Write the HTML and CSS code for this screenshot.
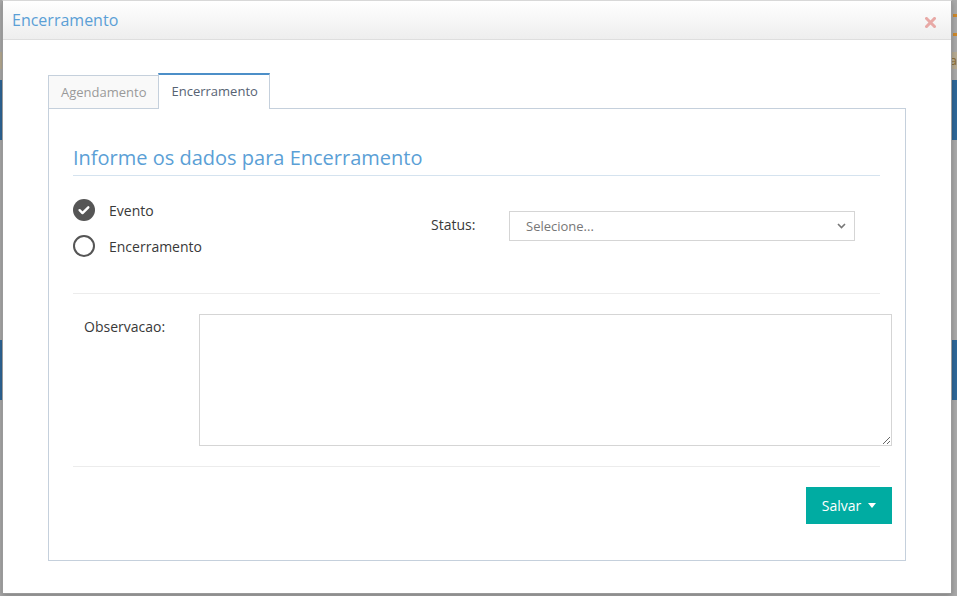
FILE: index.html
```html
<!DOCTYPE html>
<html lang="pt">
<head>
<meta charset="utf-8">
<title>Encerramento</title>
<link rel="stylesheet" href="styles.css">
</head>
<body>
<div class="backdrop">
  <div class="bg-marks"><span class="dash"></span><span class="dash"></span></div>
  <div class="bg-note">ia</div>
  <div class="bg-bar bar1"></div>
  <div class="bg-bar bar2"></div>
</div>

<div class="modal">
  <div class="modal-header">
    <h4 class="modal-title">Encerramento</h4>
    <button class="close" type="button" aria-label="Fechar">
      <svg width="11" height="11" viewBox="0 0 11 11"><path d="M1.5 1.5L9.5 9.5M9.5 1.5L1.5 9.5" stroke="#e8a9a6" stroke-width="3" stroke-linecap="square"/></svg>
    </button>
  </div>
  <div class="modal-body">
    <ul class="tabs">
      <li class="tab">Agendamento</li>
      <li class="tab active">Encerramento</li>
    </ul>
    <div class="tab-panel">
      <h3 class="section-title">Informe os dados para Encerramento</h3>

      <div class="form-row">
        <div class="radios">
          <label class="radio">
            <span class="radio-icon checked">
              <svg width="22" height="22" viewBox="0 0 22 22"><circle cx="11" cy="11" r="11" fill="#555"/><path d="M6.6 11.2l2.9 2.9 5.8-5.8" fill="none" stroke="#fff" stroke-width="2.4" stroke-linecap="round" stroke-linejoin="round"/></svg>
            </span>
            <span class="radio-text">Evento</span>
          </label>
          <label class="radio">
            <span class="radio-icon">
              <svg width="22" height="22" viewBox="0 0 22 22"><circle cx="11" cy="11" r="10" fill="none" stroke="#555" stroke-width="2"/></svg>
            </span>
            <span class="radio-text">Encerramento</span>
          </label>
        </div>
        <div class="status">
          <span class="status-label">Status:</span>
          <div class="select-wrap">
            <select class="select">
              <option>Selecione...</option>
            </select>
            <svg class="chevron" width="9" height="6" viewBox="0 0 9 6"><path d="M1 1l3.5 3.5L8 1" fill="none" stroke="#777" stroke-width="1.6"/></svg>
          </div>
        </div>
      </div>

      <hr class="divider">

      <div class="obs-row">
        <label class="obs-label">Observacao:</label>
        <textarea class="textarea"></textarea>
      </div>

      <hr class="divider second">

      <div class="actions">
        <button class="btn-save" type="button">Salvar <span class="caret"></span></button>
      </div>
    </div>
  </div>
</div>
</body>
</html>
```

FILE: styles.css
```css
* { box-sizing: border-box; }

html, body {
  margin: 0;
  padding: 0;
}

body {
  width: 957px;
  height: 596px;
  overflow: hidden;
  position: relative;
  background: #ababab;
  font-family: "Open Sans", "Liberation Sans", sans-serif;
  color: #393939;
}

/* page behind the overlay */
.backdrop {
  height: 596px;
  padding-top: 14px;
}
.bg-marks {
  display: flex;
  flex-direction: column;
  align-items: flex-end;
  gap: 16px;
  height: 38px;
}
.bg-marks .dash {
  display: block;
  width: 4px;
  height: 3px;
  background: #d08a2a;
}
.bg-note {
  height: 17px;
  background: #b9ad94;
  color: #8a6a30;
  font-size: 13px;
  line-height: 17px;
  text-align: right;
}
.bg-bar {
  height: 60px;
  background: #2f6899;
}
.bar1 { margin-top: 11px; }
.bar2 { margin-top: 200px; }

/* modal */
.modal {
  position: absolute;
  left: 2px;
  top: 0;
  width: 950px;
  height: 594px;
  background: #fff;
  border: 1px solid #9a9a9a;
  border-top-color: #d8d8d8;
  box-shadow: 0 2px 6px rgba(0, 0, 0, 0.25);
}

.modal-header {
  height: 39px;
  display: flex;
  align-items: center;
  justify-content: space-between;
  padding: 0 15px 0 9px;
  background: linear-gradient(#ffffff, #eeeeee);
  border-bottom: 1px solid #dedede;
}
.modal-title {
  margin: 0;
  font-size: 16px;
  font-weight: 400;
  color: #5b9fd6;
  line-height: 20px;
}
.close {
  border: 0;
  background: transparent;
  padding: 0;
  margin-top: 4px;
  width: 11px;
  height: 11px;
  display: flex;
}

.modal-body {
  padding: 34px 45px 0 45px;
}

/* tabs */
.tabs {
  list-style: none;
  margin: 0;
  padding: 0;
  display: flex;
  align-items: flex-end;
  height: 34px;
  position: relative;
  z-index: 1;
}
.tab {
  height: 33px;
  padding: 0 11px 0 12px;
  border: 1px solid #c5d0dc;
  border-bottom: 0;
  background: #f9f9f9;
  color: #999;
  font-size: 13px;
  line-height: 32px;
}
.tab.active {
  height: 36px;
  margin-bottom: -1px;
  padding: 0 11px 0 13px;
  border-top: 2px solid #4c8fc8;
  border-left-color: #c5d0dc;
  background: #fff;
  color: #576373;
  line-height: 33px;
}
.tabs .tab:first-child { border-right: 0; }

.tab-panel {
  height: 453px;
  border: 1px solid #c5d0dc;
  padding: 0 25px 0 24px;
}

.section-title {
  margin: 38px 0 0;
  padding-bottom: 6px;
  border-bottom: 1px solid #d5e3ef;
  font-size: 20px;
  font-weight: 400;
  line-height: 22px;
  color: #5b9fd6;
}

.form-row {
  display: flex;
  align-items: center;
  padding-top: 16px;
  padding-bottom: 1px;
}
.radios {
  width: 358px;
  display: flex;
  flex-direction: column;
}
.radio {
  display: flex;
  align-items: center;
  height: 36px;
}
.radio-icon {
  width: 22px;
  height: 22px;
  display: flex;
  margin-right: 14px;
}
.radio-text {
  font-size: 14px;
  color: #393939;
}

.status {
  display: flex;
  align-items: center;
  margin-top: -4px;
}
.status-label {
  width: 78px;
  margin-top: -4px;
  font-size: 14px;
  color: #393939;
}
.select-wrap {
  position: relative;
  width: 346px;
  height: 30px;
}
.select {
  width: 100%;
  height: 30px;
  appearance: none;
  -webkit-appearance: none;
  border: 1px solid #d5d5d5;
  border-radius: 0;
  background: #fff;
  padding: 0 16px;
  font-family: "Open Sans", "Liberation Sans", sans-serif;
  font-size: 13px;
  color: #777;
}
.chevron {
  position: absolute;
  right: 9px;
  top: 12px;
}

.divider {
  margin: 28px 0 0;
  height: 0;
  border: 0;
  border-top: 1px solid #ececec;
}
.divider.second { margin-top: 20px; }

.obs-row {
  display: flex;
  align-items: flex-start;
  margin-top: 20px;
  margin-right: -12px;
}
.obs-label {
  width: 126px;
  padding-left: 11px;
  padding-top: 3px;
  font-size: 14px;
  line-height: 20px;
  color: #393939;
}
.textarea {
  flex: 1;
  height: 132px;
  border: 1px solid #d5d5d5;
  border-radius: 0;
  margin: 0;
  display: block;
  font-family: "Open Sans", "Liberation Sans", sans-serif;
}

.actions {
  display: flex;
  justify-content: flex-end;
  margin-top: 20px;
  margin-right: -12px;
}
.btn-save {
  height: 37px;
  width: 86px;
  border: 0;
  background: #00aca2;
  color: #fff;
  font-family: "Open Sans", "Liberation Sans", sans-serif;
  font-size: 14px;
  display: flex;
  align-items: center;
  justify-content: center;
  gap: 7px;
  padding: 0;
}
.caret {
  width: 0;
  height: 0;
  border-left: 4.5px solid transparent;
  border-right: 4.5px solid transparent;
  border-top: 5px solid #fff;
}
```
